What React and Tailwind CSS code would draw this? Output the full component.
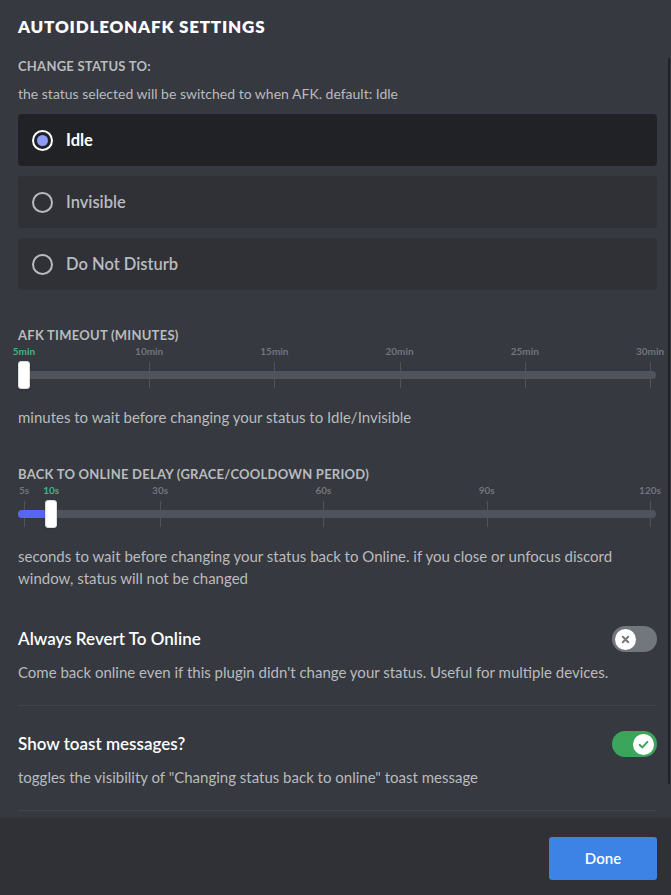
import React from 'react';

const font = { fontFamily: 'Lato, "Noto Sans", sans-serif' };

const statuses = ['Idle', 'Invisible', 'Do Not Disturb'];

const afkMarks = ['5min', '10min', '15min', '20min', '25min', '30min'].map((label, i) => ({
  label,
  pos: i / 5,
}));

const delayMarks = [5, 10, 30, 60, 90, 120].map((v) => ({
  label: `${v}s`,
  pos: (v - 5) / 115,
}));

const Radio = ({ label, checked }) => (
  <div
    className={`h-[52px] rounded flex items-center px-[14px] gap-[13px] ${
      checked ? 'bg-[#202225]' : 'bg-[#2f3136]'
    }`}
  >
    {checked ? (
      <div className="w-[21px] h-[21px] rounded-full border-2 border-white flex items-center justify-center">
        <div className="w-[11px] h-[11px] rounded-full bg-[#8e9cf8]" />
      </div>
    ) : (
      <div className="w-[21px] h-[21px] rounded-full border-2 border-[#b9bbbe]" />
    )}
    <span className={`text-[16.5px] ${checked ? 'text-white font-bold' : 'text-[#b9bbbe] font-semibold'}`}>
      {label}
    </span>
  </div>
);

const Slider = ({ marks, value, fill }) => (
  <div className="relative h-[54px]">
    <div className="absolute left-[6px] right-[7px] top-0 bottom-0">
      {marks.map((m) => (
        <React.Fragment key={m.label}>
          <div
            className={`absolute top-[2px] -translate-x-1/2 text-[10px] font-bold leading-[12px] ${
              m.pos === value ? 'text-[#43b581]' : 'text-[#72767d]'
            }`}
            style={{ left: `${m.pos * 100}%` }}
          >
            {m.label}
          </div>
          <div
            className="absolute top-[19px] h-[26px] w-px bg-[#4f545c]"
            style={{ left: `${m.pos * 100}%` }}
          />
        </React.Fragment>
      ))}
    </div>
    <div className="absolute left-0 right-[1px] top-[28px] h-[8px] rounded-full bg-[#4f545c]" />
    {fill && (
      <div
        className="absolute left-0 top-[28px] h-[8px] rounded-l-full bg-[#5865f2]"
        style={{ width: `calc(6px + ${value} * (100% - 13px))` }}
      />
    )}
    <div
      className="absolute top-[18px] h-[28px] w-[12px] -translate-x-1/2 rounded-[3px] bg-white border border-[#dcddde] shadow"
      style={{ left: `calc(6px + ${value} * (100% - 13px))` }}
    />
  </div>
);

const Toggle = ({ on }) =>
  on ? (
    <div className="w-[45px] h-[26px] rounded-full bg-[#3ba55c] flex items-center justify-end pr-[3px] shrink-0">
      <div className="w-[21px] h-[21px] rounded-full bg-white flex items-center justify-center">
        <svg width="13" height="13" viewBox="0 0 20 20">
          <path d="M4 10.5 L8.2 14.5 L16 6" fill="none" stroke="#3ba55c" strokeWidth="3" strokeLinecap="round" strokeLinejoin="round" />
        </svg>
      </div>
    </div>
  ) : (
    <div className="w-[45px] h-[26px] rounded-full bg-[#72767d] flex items-center pl-[3px] shrink-0">
      <div className="w-[21px] h-[21px] rounded-full bg-white flex items-center justify-center">
        <svg width="11" height="11" viewBox="0 0 20 20">
          <path d="M5 5 L15 15 M15 5 L5 15" fill="none" stroke="#72767d" strokeWidth="3.5" strokeLinecap="round" />
        </svg>
      </div>
    </div>
  );

const Switch = ({ title, note, on }) => (
  <div className="pt-[25px] pb-[23px] border-b border-[#42454a]">
    <div className="flex items-center justify-between h-[26px]">
      <span className="text-[17px] font-semibold text-white">{title}</span>
      <Toggle on={on} />
    </div>
    <p className="mt-[10px] text-[15px] leading-[20px] text-[#b9bbbe]">{note}</p>
  </div>
);

const Label = ({ className = '', children }) => (
  <div className={`text-[13px] leading-[16px] font-bold uppercase tracking-[0.25px] text-[#b9bbbe] ${className}`}>
    {children}
  </div>
);

export default function App() {
  return (
    <div className="w-[671px] h-[895px] flex flex-col bg-[#36393f] relative overflow-hidden" style={font}>
      <div className="flex-1 pl-[18px] pr-[14px] pt-[17px]">
        <h2 className="text-[17px] leading-[20px] font-extrabold text-white uppercase tracking-[0.8px]">
          AutoIdleOnAFK Settings
        </h2>

        <Label className="mt-[21px]">Change status to:</Label>
        <p className="mt-[10px] text-[14px] leading-[20px] text-[#b9bbbe]">
          the status selected will be switched to when AFK. default: Idle
        </p>
        <div className="mt-[10px] flex flex-col gap-[10px]">
          {statuses.map((s) => (
            <Radio key={s} label={s} checked={s === 'Idle'} />
          ))}
        </div>

        <Label className="mt-[37px]">AFK Timeout (minutes)</Label>
        <Slider marks={afkMarks} value={0} />
        <p className="mt-[10px] text-[15px] leading-[20px] text-[#b9bbbe]">
          minutes to wait before changing your status to Idle/Invisible
        </p>

        <Label className="mt-[39px]">Back to online delay (grace/cooldown period)</Label>
        <Slider marks={delayMarks} value={5 / 115} fill />
        <p className="mt-[9px] text-[15px] leading-[22px] text-[#b9bbbe]">
          seconds to wait before changing your status back to Online. if you close or unfocus discord
          window, status will not be changed
        </p>

        <div className="mt-[12px]">
          <Switch
            title="Always Revert To Online"
            note="Come back online even if this plugin didn't change your status. Useful for multiple devices."
          />
          <Switch
            title="Show toast messages?"
            note={'toggles the visibility of "Changing status back to online" toast message'}
            on
          />
        </div>
      </div>

      <div className="h-[77px] shrink-0 bg-[#2f3136] flex items-start justify-end pt-[19px] pr-[14px]">
        <button className="w-[108px] h-[43px] rounded-[3px] bg-[#3d83e6] text-white text-[15px] font-semibold">
          Done
        </button>
      </div>

      <div className="absolute right-[1px] top-[58px] h-[726px] w-[2px] rounded bg-[#202225]" />
    </div>
  );
}
